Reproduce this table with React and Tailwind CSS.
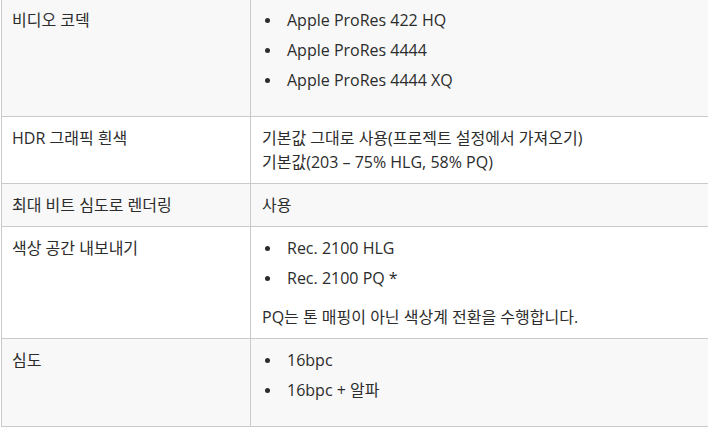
import React from 'react';

const rows = [
  {
    label: '비디오 코덱',
    list: ['Apple ProRes 422 HQ', 'Apple ProRes 4444', 'Apple ProRes 4444 XQ'],
    shade: true,
  },
  {
    label: 'HDR 그래픽 흰색',
    lines: ['기본값 그대로 사용(프로젝트 설정에서 가져오기)', '기본값(203 – 75% HLG, 58% PQ)'],
  },
  {
    label: '최대 비트 심도로 렌더링',
    lines: ['사용'],
    shade: true,
  },
  {
    label: '색상 공간 내보내기',
    list: ['Rec. 2100 HLG', 'Rec. 2100 PQ *'],
    note: 'PQ는 톤 매핑이 아닌 색상계 전환을 수행합니다.',
  },
  {
    label: '심도',
    list: ['16bpc', '16bpc + 알파'],
    shade: true,
  },
];

const Row = ({ row }) => {
  return (
    <div className={`flex border-b border-[#cacaca] ${row.shade ? 'bg-[#f8f8f8]' : 'bg-white'}`}>
      <div className="w-[249px] shrink-0 border-r border-[#cacaca] pl-[10px] pr-[10px] pt-[9px] pb-[9px]">
        {row.label}
      </div>
      <div className="flex-1 pl-[11px] pr-[11px] pt-[9px] pb-[9px]">
        {row.lines && row.lines.map((l, i) => <p key={i}>{l}</p>)}
        {row.list && (
          <ul className="flex flex-col gap-[6px] mb-[15px]">
            {row.list.map((item, i) => (
              <li key={i} className="flex items-center">
                <span className="ml-[3px] mr-[17px] w-[5px] h-[5px] rounded-full bg-[#2c2c2c] shrink-0" />
                <span>{item}</span>
              </li>
            ))}
          </ul>
        )}
        {row.note && <p>{row.note}</p>}
      </div>
    </div>
  );
};

export default function App() {
  return (
    <div className="w-[708px] h-[427px] overflow-hidden bg-white">
      <div
        className="ml-px -mt-[2px] w-[760px] border-l border-t border-[#cacaca] text-[16px] leading-[24px] text-[#2c2c2c]"
        style={{ fontFamily: '"Open Sans", "Noto Sans CJK KR", sans-serif' }}
      >
        {rows.map((row, i) => (
          <Row key={i} row={row} />
        ))}
      </div>
    </div>
  );
}
